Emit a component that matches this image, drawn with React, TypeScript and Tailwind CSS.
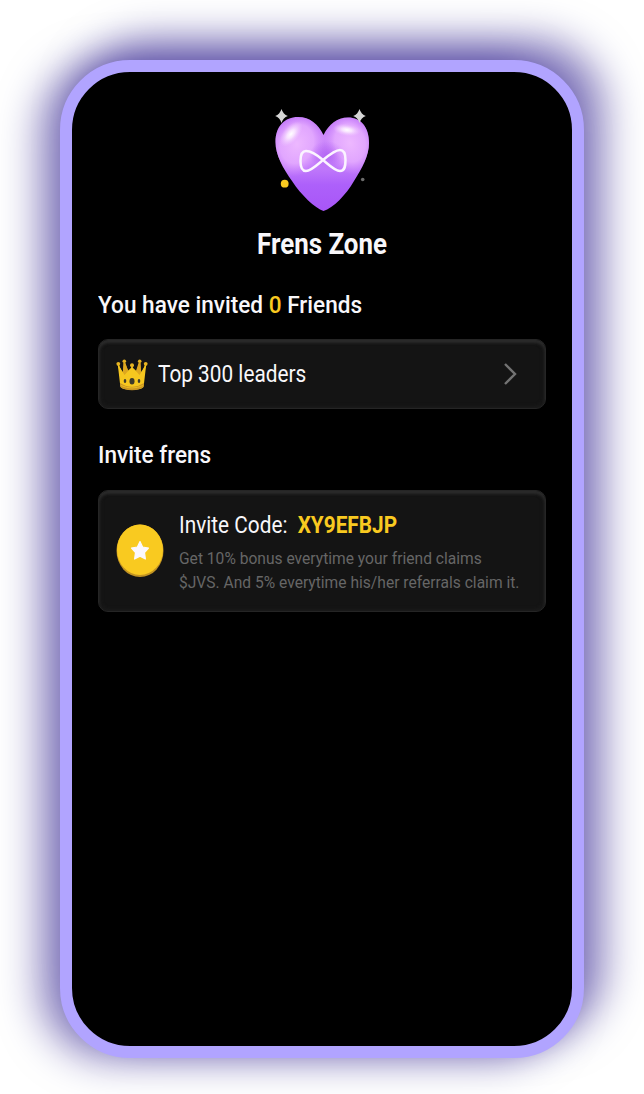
import React from 'react';

function Sparkle({ x, y }: { x: number; y: number }) {
  return (
    <path
      transform={`translate(${x} ${y})`}
      d="M0-7Q1.7-1.7 6.300 0Q1.7 1.7 0 7Q-1.7 1.7-6.300 0Q-1.7-1.7 0-7Z"
      fill="#d6d6d6"
    />
  );
}

function Heart() {
  return (
    <svg className="block h-[125px] w-[130px]" viewBox="0 0 130 125" aria-hidden="true">
      <defs>
        <linearGradient id="base" x1="0" y1="0" x2="0" y2="1">
          <stop offset="0" stopColor="#b566f5" />
          <stop offset=".25" stopColor="#cd8afa" />
          <stop offset=".5" stopColor="#c680fb" />
          <stop offset=".72" stopColor="#ad60fa" />
          <stop offset="1" stopColor="#a855f7" />
        </linearGradient>
        <radialGradient id="glow">
          <stop offset="0" stopColor="#edb8ff" />
          <stop offset=".6" stopColor="#e4aaff" stopOpacity=".9" />
          <stop offset="1" stopColor="#d590ff" stopOpacity="0" />
        </radialGradient>
        <radialGradient id="shine">
          <stop offset="0" stopColor="#fff" />
          <stop offset=".35" stopColor="#fdf0ff" stopOpacity=".8" />
          <stop offset="1" stopColor="#efc8ff" stopOpacity="0" />
        </radialGradient>
        <radialGradient id="dark">
          <stop offset="0" stopColor="#a653ef" stopOpacity=".6" />
          <stop offset="1" stopColor="#a653ef" stopOpacity="0" />
        </radialGradient>
        <clipPath id="heart">
          <path d="M63.5 113C55 110 41 97 32 83C23 70 15.5 57 15.5 44C15.5 28 25 19 38 19C50 19 58 26 63.5 37C69 26 77 19.500 88 19.500C101 19.500 109 29 109 45C109 58 102 70 94 83C86 97 73 110 63.500 113Z" />
        </clipPath>
      </defs>
      <g clipPath="url(#heart)">
        <rect x="10" y="15" width="105" height="100" fill="url(#base)" />
        <ellipse cx="37" cy="46" rx="27" ry="33" fill="url(#glow)" transform="rotate(20 37 46)" />
        <ellipse cx="90" cy="45" rx="25" ry="32" fill="url(#glow)" transform="rotate(-15 90 45)" />
        <ellipse cx="67" cy="57" rx="18" ry="14" fill="url(#dark)" />
        <ellipse cx="31" cy="36" rx="8" ry="15" fill="url(#shine)" transform="rotate(40 31 36)" />
        <ellipse cx="87" cy="32" rx="14" ry="6" fill="url(#shine)" transform="rotate(8 87 32)" />
      </g>
      <path
        d="M63 62C56 56 50 53 46 53C41 53 40.500 58 40.500 63C40.500 68 41 73 46 73C51 73 57 67 63 62C69 57 75 52 80 52C85 52 85.500 57 85.500 62C85.500 68 85 73 80 73C75 73 69 67 63 62Z"
        fill="none"
        stroke="#fbf4ff"
        strokeWidth="2.500"
      />
      <Sparkle x={21.5} y={18} />
      <Sparkle x={99.5} y={18} />
      <circle cx="24.700" cy="85.700" r="3.900" fill="#f9ca20" />
      <circle cx="102.700" cy="81.500" r="1.800" fill="#6c6c6c" />
    </svg>
  );
}

function Crown() {
  return (
    <svg className="block h-8 w-8 shrink-0 translate-y-px" viewBox="0 0 32 32" aria-hidden="true">
      <path d="M8.500 3L13 13H20L23.500 3L27 22H5Z" fill="#d09a22" />
      <path
        d="M1.700 5L8.500 15.500L9.500 14L16 8L22.500 14L23.500 15.500L30.300 5L27.700 27Q27.500 29 24 30Q16 32 8 30Q4.500 29 4.300 27Z"
        fill="#f6c71f"
      />
      <path d="M7.300 3.500H9.300L12 12L8.500 16L7 13ZM24.700 3.500H22.700L20 12L23.500 16L25 13Z" fill="#dda71f" />
      <path d="M4 24Q10 28 16 27.700Q22 28 28 24L27.500 28Q24 31 16 31.300Q8 31 4.500 28Z" fill="#cb9623" />
      <path d="M5 26.500Q16 31.500 27 26.500" fill="none" stroke="#ebbc20" strokeWidth="1" />
      <path d="M2 5L6 16M30 5L26 16M16 7V17" stroke="#f6c71f" strokeWidth="1.500" />
      <g fill="#e6b422">
        <circle cx="2.300" cy="4.800" r="1.900" />
        <circle cx="8.300" cy="2.300" r="1.800" />
        <circle cx="16" cy="6.300" r="2" />
        <circle cx="23.700" cy="2.300" r="1.800" />
        <circle cx="29.700" cy="4.800" r="1.900" />
      </g>
      <g fill="#3d3a2b">
        <ellipse cx="16" cy="22.300" rx="2.500" ry="3.200" />
        <ellipse cx="9" cy="22" rx="1.300" ry="1.900" />
        <ellipse cx="23" cy="22" rx="1.300" ry="1.900" />
      </g>
    </svg>
  );
}

function Coin() {
  return (
    <svg className="block h-[54px] w-12 shrink-0" viewBox="0 0 48 54" aria-hidden="true">
      <ellipse cx="24" cy="26.800" rx="23.500" ry="26.300" fill="#c29322" />
      <ellipse cx="24" cy="25.800" rx="23" ry="25.200" fill="#f9ca20" />
      <path
        d="M24 17.500L26.600 23L32.500 24L28.500 28.500L29.400 35L24 32.200L18.600 35L19.500 28.500L15.500 24L21.400 23Z"
        fill="#fbf8ff"
        stroke="#fbf8ff"
        strokeWidth="1.200"
        strokeLinejoin="round"
      />
    </svg>
  );
}

const card =
  'flex items-center rounded-[10px] border border-[#252525] bg-[#141414] shadow-[inset_0_3px_3px_#2b2b2b,inset_0_0_5px_#222]';

export default function App() {
  return (
    <main className="flex h-[1094px] w-[644px] items-start justify-center overflow-hidden bg-white pt-[60px] font-['Roboto',sans-serif] text-[#f8f7fa]">
      <section className="flex h-[998px] w-[524px] flex-col rounded-[70px] border-12 border-[#b1a4ff] bg-black px-[26px] pt-[26px] shadow-[20px_-20px_40px_rgba(20,0,128,0.5),-20px_0_40px_rgba(20,0,128,0.5)]">
        <div className="flex justify-center pl-[6px]">
          <Heart />
        </div>
        <h1 className="mt-[4px] h-[34px] origin-center scale-y-[1.110] text-center text-[25.900px] leading-[34px] font-bold whitespace-nowrap">
          Frens Zone
        </h1>
        <h2 className="mt-[31px] h-7 origin-center scale-y-[1.060] text-[22.600px] leading-7 font-medium whitespace-nowrap">
          You have invited <span className="text-[#f9ca20]">0</span> Friends
        </h2>
        <div className={`${card} mt-[19px] h-[70px] pr-[27px] pl-[17px]`}>
          <Crown />
          <span className="ml-[10px] scale-y-[1.130] text-[20.800px] leading-7 whitespace-nowrap">Top 300 leaders</span>
          <svg className="ml-auto h-6 w-4" viewBox="0 0 16 24" fill="none" aria-hidden="true">
            <path d="M3 2L13 12L3 22" stroke="#737373" strokeWidth="2.400" />
          </svg>
        </div>
        <h2 className="mt-[33px] h-7 scale-y-[1.060] text-[22.600px] leading-7 font-medium whitespace-nowrap">
          Invite frens
        </h2>
        <div className={`${card} mt-5 h-[122px] pl-[17px]`}>
          <Coin />
          <div className="ml-[15px] flex flex-col pt-px">
            <p className="h-7 scale-y-[1.130] text-[20.800px] leading-7 whitespace-nowrap">
              Invite Code: <span className="ml-[5px] font-bold text-[#f9ca20]">XY9EFBJP</span>
            </p>
            <p className="mt-[11px] h-[42px] origin-center scale-y-[1.100] text-[15.600px] leading-[21px] whitespace-nowrap text-[#666]">
              Get 10% bonus everytime your friend claims
              <br />
              $JVS. And 5% everytime his/her referrals claim it.
            </p>
          </div>
        </div>
      </section>
    </main>
  );
}
